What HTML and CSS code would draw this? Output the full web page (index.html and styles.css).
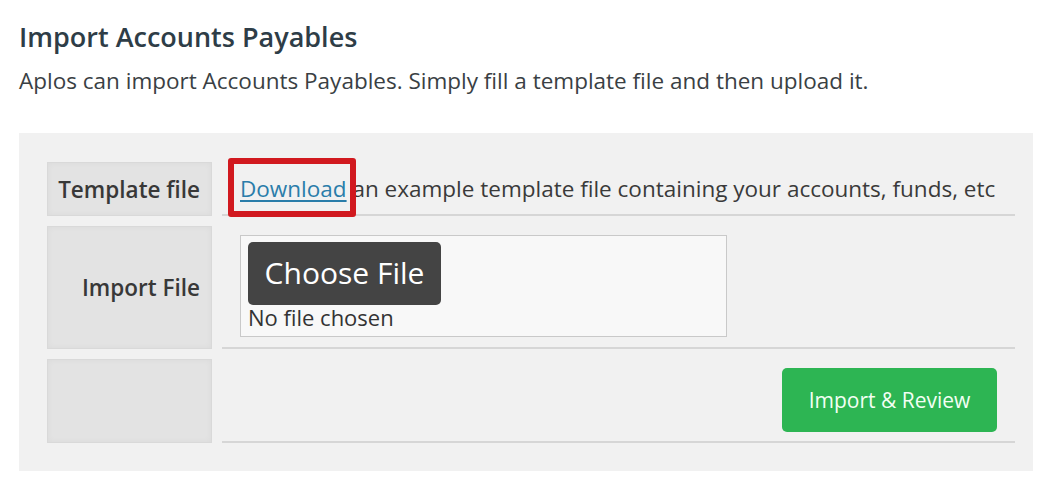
FILE: index.html
```html
<!DOCTYPE html>
<html>
<head>
<meta charset="UTF-8">
<title>Import Accounts Payables</title>
<link rel="stylesheet" href="styles.css">
</head>
<body>
<div id="page">
    <h1 class="page-title">Import Accounts Payables</h1>
    <p class="page-intro">Aplos can import Accounts Payables. Simply fill a template file and then upload it.</p>

    <div id="import-panel">
        <div class="form-grid">
            <div class="label-cell">Template file</div>
            <div class="value-cell row-template">
                <span class="template-text"><span class="download-wrap"><a href="#" class="download-link">Download</a><span class="highlight-box"></span></span> an example template file containing your accounts, funds, etc</span>
            </div>

            <div class="label-cell">Import File</div>
            <div class="value-cell row-file">
                <div class="file-box">
                    <span class="choose-btn">Choose File</span>
                    <span class="file-status">No file chosen</span>
                </div>
            </div>

            <div class="label-cell"></div>
            <div class="value-cell submit-cell">
                <button type="button" class="btn-import">Import &amp; Review</button>
            </div>
        </div>
    </div>
</div>
</body>
</html>
```

FILE: styles.css
```css
body {
    margin: 0;
    font-family: "Open Sans", "Liberation Sans", sans-serif;
    background-color: #FFFFFF;
    color: #333333;
}

#page {
    padding: 19px 8px 6px 19px;
}

.page-title {
    margin: 0px 0px 10px 0px;
    font-size: 27px;
    font-weight: 600;
    line-height: 36px;
    color: #2E3D47;
}

.page-intro {
    margin: 0px 0px 37px 0px;
    font-size: 22.5px;
    line-height: 31px;
    color: #3A3F44;
}

#import-panel {
    width: 1014px;
    background-color: #F1F1F1;
    padding: 29px 18px 28px 28px;
    box-sizing: border-box;
}

.form-grid {
    display: grid;
    grid-template-columns: 165px minmax(0, 1fr);
    grid-template-rows: 54px 123px 84px;
    column-gap: 10px;
    row-gap: 10px;
}

.label-cell {
    display: flex;
    align-items: center;
    justify-content: flex-end;
    padding-right: 11px;
    background-color: #E3E3E3;
    border: 1px solid #D9D9D9;
    box-shadow: inset 0 0 6px rgba(0, 0, 0, 0.04);
    font-size: 22.5px;
    font-weight: 600;
    color: #383838;
}

.value-cell {
    border-bottom: 2px solid #D6D6D6;
    font-size: 22.5px;
    color: #3A3A3A;
    min-width: 0;
}

.row-template {
    display: flex;
    align-items: center;
    padding-left: 18px;
    white-space: nowrap;
}

.download-wrap {
    position: relative;
}

.download-link {
    color: #2A7DAA;
    text-decoration: underline;
    text-underline-offset: 3px;
}

.highlight-box {
    position: absolute;
    left: -12px;
    top: -15px;
    width: 128px;
    height: 59px;
    border: 6px solid #D1191F;
    border-radius: 3px;
    box-sizing: border-box;
}

.row-file {
    padding: 9px 0px 0px 18px;
}

.file-box {
    width: 487px;
    height: 102px;
    box-sizing: border-box;
    background-color: #F8F8F8;
    border: 1px solid #C9C9C9;
    padding: 6px 7px;
}

.choose-btn {
    display: inline-block;
    width: 193px;
    height: 63px;
    line-height: 62px;
    text-align: center;
    background-color: #444444;
    color: #FFFFFF;
    font-size: 30px;
    border-radius: 5px;
}

.file-status {
    display: block;
    font-size: 22px;
    line-height: 25px;
    color: #333333;
}

.submit-cell {
    display: flex;
    align-items: center;
    justify-content: flex-end;
    padding-right: 18px;
}

.btn-import {
    width: 215px;
    height: 64px;
    background-color: #2DB553;
    color: #F2FFF4;
    border: none;
    border-radius: 5px;
    font-family: "Open Sans", "Liberation Sans", sans-serif;
    font-size: 21px;
    cursor: pointer;
}
```
